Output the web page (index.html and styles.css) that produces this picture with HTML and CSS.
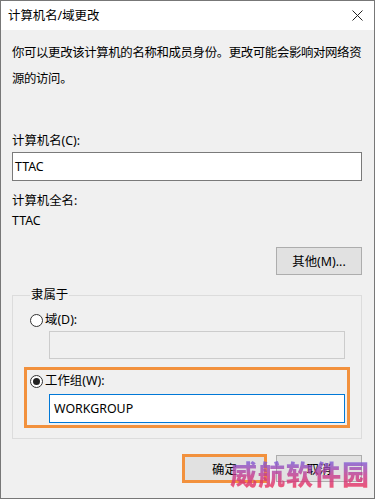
FILE: index.html
```html
<!DOCTYPE html>
<html lang="zh-CN">
	<head>
		<meta charset="utf-8"/>
		<link rel="stylesheet" href="styles.css">
		<title>计算机名/域更改</title>
	</head>
	<body>
		<div class="win">
			<div class="titlebar">
				<span class="ttl">计算机名/域更改</span>
				<svg class="close" width="11" height="11" viewBox="0 0 11 11"><path d="M0.5 0.5L10.5 10.5M10.5 0.5L0.5 10.5" stroke="#222" stroke-width="1" fill="none"/></svg>
			</div>
			<div class="body">
				<p class="desc">你可以更改该计算机的名称和成员身份。更改可能会影响对网络资<br>源的访问。</p>

				<div class="lbl first">计算机名(C):</div>
				<div class="inp name">TTAC</div>

				<div class="lbl">计算机全名:</div>
				<div class="lbl">TTAC</div>

				<div class="right">
					<button class="btn more">其他(M)...</button>
				</div>

				<fieldset class="grp">
					<legend>隶属于</legend>
					<div class="opt dom"><span class="radio"></span>域(D):</div>
					<div class="inp off"></div>
					<div class="mark">
						<div class="opt"><span class="radio on"></span>工作组(W):</div>
						<div class="inp wg">WORKGROUP</div>
					</div>
				</fieldset>

				<div class="actions">
					<button class="btn ok">确定</button>
					<button class="btn">取消</button>
				</div>
			</div>
			<div class="wm">威航软件园</div>
		</div>
	</body>
</html>
```
FILE: styles.css
```css
body{margin:0;font-family:"Noto Sans","Noto Sans CJK SC",sans-serif;font-size:12.4px;color:#000;}
.win{position:relative;box-sizing:border-box;width:375px;height:499px;border:1px solid #777;background:#f0f0f0;overflow:hidden;}
.titlebar{height:29px;background:#fff;display:flex;align-items:center;justify-content:space-between;padding:0 11px 0 7px;}
.ttl{font-size:12.4px;line-height:20px;}
.close{display:block;}
.body{padding:0 12px 0 11px;}
.desc{margin:10px -14px 0 0;line-height:26px;letter-spacing:-.35px;white-space:nowrap;}
.lbl{line-height:20px;}
.lbl.first{margin-top:39px;}
.inp{box-sizing:border-box;height:29px;line-height:27px;border:1px solid #7a7a7a;background:#fff;padding-left:2px;margin:1px 0 10px;}
.right{display:flex;justify-content:flex-end;margin-top:16px;}
.btn{box-sizing:border-box;width:86px;height:28px;border:1px solid #adadad;background:#e1e1e1;font-family:inherit;font-size:12.4px;color:#000;padding:0;}
.grp{margin:10px 0 0;border:1px solid #dcdcdc;padding:0 11px 10px;min-width:0;}
.grp legend{padding:0 1px;margin-left:6px;line-height:20px;}
.opt{display:flex;align-items:center;line-height:20px;gap:2px;}
.opt.dom{margin:5px 0 0 6px;}
.radio{box-sizing:border-box;width:13px;height:13px;border:1px solid #333;border-radius:50%;background:#fff;display:inline-flex;align-items:center;justify-content:center;}
.radio.on::after{content:"";width:7px;height:7px;border-radius:50%;background:#222;}
.inp.off{margin:1px 5px 0 25px;height:28px;background:#f0f0f0;border-color:#ccc;}
.mark{margin-top:8px;border:3px solid #f2913d;padding:1px 2px 2px 3px;}
.inp.wg{margin:3px 0 0 19px;border-color:#0078d7;padding-left:4px;}
.actions{display:flex;justify-content:flex-end;align-items:center;gap:9px;margin-top:15px;}
.actions .btn{height:27px;}
.btn.ok{width:85px;height:29px;border:3px solid #f2913d;}
.wm{position:absolute;left:229px;top:458px;font-family:"Noto Sans CJK SC",sans-serif;font-weight:900;font-size:27px;line-height:30px;letter-spacing:1px;background:linear-gradient(#6f63e6,#c63a8e 55%,#ef2f55);-webkit-background-clip:text;background-clip:text;color:transparent;opacity:.8;filter:blur(.5px);}
```
